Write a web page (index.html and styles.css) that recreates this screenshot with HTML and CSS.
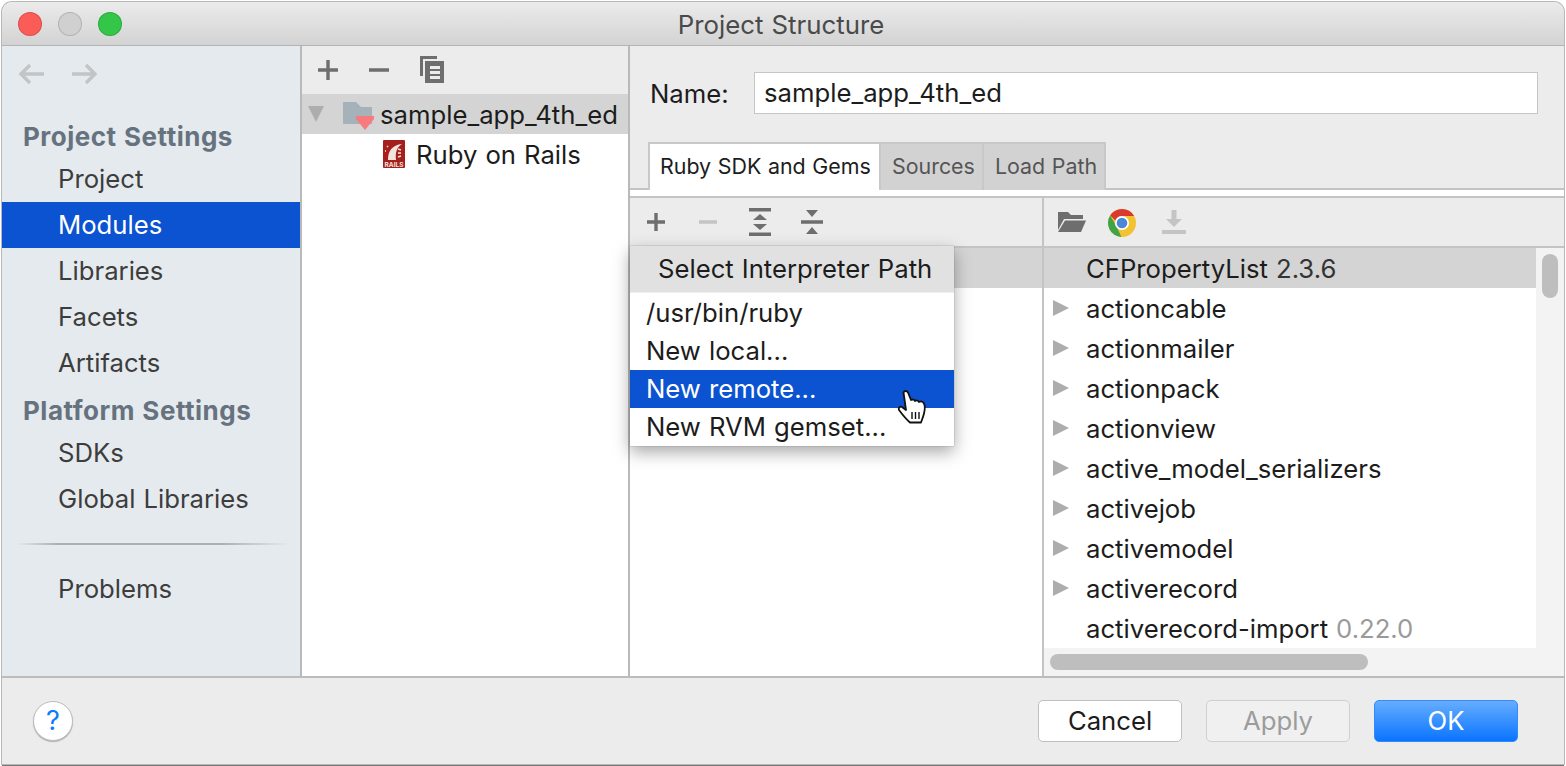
FILE: index.html
```html
<!DOCTYPE html>
<html lang="en">
<head>
    <meta charset="UTF-8">
    <title>Project Structure</title>
    <link rel="stylesheet" href="styles.css">
</head>
<body>
    <div class="window">
        <header class="titlebar">
            <div class="lights">
                <span class="light red"></span>
                <span class="light grey"></span>
                <span class="light green"></span>
            </div>
            <div class="title">Project Structure</div>
        </header>
        <div class="main">
            <aside class="sidebar">
                <div class="history">
                    <svg width="30" height="22" viewBox="0 0 30 22"><path d="M27 11H4M13 2l-9 9 9 9" fill="none" stroke="#c2c4c6" stroke-width="3.4"/></svg>
                    <svg width="30" height="22" viewBox="0 0 30 22"><path d="M2 11h23M16 2l9 9-9 9" fill="none" stroke="#c2c4c6" stroke-width="3.4"/></svg>
                </div>
                <div class="side-head first">Project Settings</div>
                <div class="side-item">Project</div>
                <div class="side-item active">Modules</div>
                <div class="side-item">Libraries</div>
                <div class="side-item">Facets</div>
                <div class="side-item">Artifacts</div>
                <div class="side-head">Platform Settings</div>
                <div class="side-item">SDKs</div>
                <div class="side-item">Global Libraries</div>
                <div class="side-sep"></div>
                <div class="side-item">Problems</div>
            </aside>
            <section class="modules">
                <div class="toolbar mod-tools">
                    <svg width="22" height="22" viewBox="0 0 22 22"><path d="M11 1v20M1 11h20" stroke="#6e6e6e" stroke-width="3.4"/></svg>
                    <svg width="22" height="22" viewBox="0 0 22 22"><path d="M1 11h20" stroke="#6e6e6e" stroke-width="3.4"/></svg>
                    <svg width="26" height="28" viewBox="0 0 26 28"><path d="M1 0h17v3H4v17H1z" fill="#6e6e6e"/><path fill-rule="evenodd" d="M6 5h19v22H6zM11 10v3h10v-3zM11 15v3h10v-3zM11 20v3h10v-3z" fill="#6e6e6e"/></svg>
                </div>
                <div class="tree-row selected">
                    <span class="tri-down"></span>
                    <svg class="folder" width="32" height="32" viewBox="0 0 32 32"><path d="M0 2h13l5 5h11v17H0z" fill="#a5b2ba"/><path d="M13 16h18v3l-9 11-9-11z" fill="#f77b7c"/></svg>
                    <span>sample_app_4th_ed</span>
                </div>
                <div class="tree-row child">
                    <svg width="22" height="28" viewBox="0 0 22 28">
                        <rect width="22" height="28" rx="1" fill="#a5201c"/>
                        <path d="M5 20C5 11 9 5 19 4c-5 3-7 8-6 16z" fill="#f3e3dc"/>
                        <path d="M15 9l3 1M15 13l3 0M15 17l3-1M4 6l1 1M2 11l1 0" stroke="#f3e3dc" stroke-width="1.5"/>
                        <text class="rails-label" x="11" y="26.500" text-anchor="middle">RAILS</text>
                    </svg>
                    <span>Ruby on Rails</span>
                </div>
            </section>
            <section class="details">
                <div class="name-row">
                    <label class="name-label">Name:</label>
                    <div class="name-input">sample_app_4th_ed</div>
                </div>
                <div class="tabs">
                    <div class="tab active">Ruby SDK and Gems</div>
                    <div class="tab">Sources</div>
                    <div class="tab">Load Path</div>
                </div>
                <div class="panes">
                    <div class="pane sdk-pane">
                        <div class="toolbar sdk-tools">
                            <svg width="20" height="20" viewBox="0 0 20 20"><path d="M10 1v18M1 10h18" stroke="#6e6e6e" stroke-width="3.4"/></svg>
                            <svg class="minus" width="20" height="20" viewBox="0 0 20 20"><path d="M1 10h18" stroke="#c4c4c4" stroke-width="3.4"/></svg>
                            <svg width="24" height="28" viewBox="0 0 24 28"><path d="M1 0h22v3.500H1zM1 24.500h22V28H1zM12 6l7 6H5zM12 22l-7-6h14z" fill="#6e6e6e"/></svg>
                            <svg class="collapse" width="24" height="28" viewBox="0 0 24 28"><path d="M1 12.300h22v3.400H1zM6 2h12l-6 7zM12 19l6 7H6z" fill="#6e6e6e"/></svg>
                        </div>
                        <div class="sdk-list">
                            <div class="gem-row selected"></div>
                        </div>
                    </div>
                    <div class="pane gems-pane">
                        <div class="toolbar gem-tools">
                            <svg width="30" height="22" viewBox="0 0 30 22"><path d="M1 1h10l3 3h12v4H7L1 19z" fill="#6e6e6e"/><path d="M8 9.500h21L24 21H1z" fill="#6e6e6e"/></svg>
                            <svg class="chrome" width="30" height="30" viewBox="0 0 30 30">
                                <circle cx="15" cy="15" r="14" fill="#f2c230"/>
                                <path d="M15 1a14 14 0 0 1 12.100 7H15a7 7 0 0 0-6.600 4.500L3.200 7.500A14 14 0 0 1 15 1z" fill="#d9392f"/>
                                <path d="M3.200 7.500l6.200 10.700 5 10.800A14 14 0 0 1 3.200 7.500z" fill="#3fa349"/>
                                <circle cx="15" cy="15" r="7" fill="#fff"/>
                                <circle cx="15" cy="15" r="5.300" fill="#4a87d6"/>
                            </svg>
                            <svg class="download" width="24" height="24" viewBox="0 0 24 24"><path d="M9.500 0h5v9H20l-8 8-8-8h5.500zM0 20h24v4H0z" fill="#c4c4c4"/></svg>
                        </div>
                        <div class="gem-body">
                            <div class="gem-list">
                                <div class="gem-row selected"><span class="gem-name">CFPropertyList <span class="ver-dark">2.3.6</span></span></div>
                                <div class="gem-row"><span class="tri-right"></span><span class="gem-name">actioncable</span></div>
                                <div class="gem-row"><span class="tri-right"></span><span class="gem-name">actionmailer</span></div>
                                <div class="gem-row"><span class="tri-right"></span><span class="gem-name">actionpack</span></div>
                                <div class="gem-row"><span class="tri-right"></span><span class="gem-name">actionview</span></div>
                                <div class="gem-row"><span class="tri-right"></span><span class="gem-name">active_model_serializers</span></div>
                                <div class="gem-row"><span class="tri-right"></span><span class="gem-name">activejob</span></div>
                                <div class="gem-row"><span class="tri-right"></span><span class="gem-name">activemodel</span></div>
                                <div class="gem-row"><span class="tri-right"></span><span class="gem-name">activerecord</span></div>
                                <div class="gem-row"><span class="gem-name">activerecord-import <span class="ver">0.22.0</span></span></div>
                            </div>
                            <div class="vscroll"><div class="vthumb"></div></div>
                        </div>
                        <div class="hscroll"><div class="hthumb"></div></div>
                    </div>
                </div>
                <div class="popup">
                    <div class="popup-head">Select Interpreter Path</div>
                    <div class="popup-item">/usr/bin/ruby</div>
                    <div class="popup-item">New local...</div>
                    <div class="popup-item active">New remote...</div>
                    <div class="popup-item">New RVM gemset...</div>
                </div>
                <svg class="cursor" width="30" height="35" viewBox="0 0 30 35">
                    <path d="M6.500 2.500c1-2 3.500-2 4.500 0L14 10c2-1 3.500-.5 4 1 1.500-1 3.500-.5 4 1 2-1 4-.5 5 1.500 1 2 1 6 0 10-1 4-2 6-3 9H13C10 30 5 24 2 20c-1-2 1-4 3-3l4 3z" fill="#fff" stroke="#111" stroke-width="1.8" stroke-linejoin="round"/>
                    <path d="M15 22v7M18.500 22v7M22 22v7" stroke="#111" stroke-width="1.4"/>
                </svg>
            </section>
        </div>
        <footer class="footer">
            <div class="help">?</div>
            <div class="buttons">
                <div class="btn">Cancel</div>
                <div class="btn disabled">Apply</div>
                <div class="btn primary">OK</div>
            </div>
        </footer>
    </div>
</body>
</html>
```

FILE: styles.css
```css
* {
    box-sizing: border-box;
}
html, body {
    height: 100%;
}
body {
    margin: 0;
    padding: 2px;
    background-color: #fff;
    font-family: Inter, "Liberation Sans", sans-serif;
    font-size: 25.7px;
    word-spacing: 0.8px;
    color: #1c1c1c;
    overflow: hidden;
}
.window {
    height: 762px;
    display: flex;
    flex-direction: column;
    background: #ececec;
    border-radius: 10px 10px 0 0;
    box-shadow: 0 0 0 1px #b8b8b8, 0 2px 0 #777;
    overflow: hidden;
}
.titlebar {
    height: 44px;
    flex: none;
    display: flex;
    align-items: center;
    position: relative;
    background: linear-gradient(#ebebeb, #d3d3d3);
    border-bottom: 1px solid #b4b4b4;
}
.lights {
    display: flex;
    gap: 16px;
    padding-left: 16px;
}
.light {
    width: 24px;
    height: 24px;
    border-radius: 50%;
    border: 1px solid rgba(0, 0, 0, 0.14);
}
.red { background: #fc5c57; }
.grey { background: #d0d0d0; }
.green { background: #33c648; }
.title {
    position: absolute;
    left: 0;
    right: 4px;
    top: 5px;
    text-align: center;
    color: #4a4a4a;
    font-size: 25.8px;
    line-height: 36px;
}
.main {
    flex: 1;
    display: flex;
    min-height: 0;
}
.sidebar {
    width: 300px;
    flex: none;
    background: #e5eaee;
    border-right: 2px solid #b9b9b9;
}
.history {
    display: flex;
    gap: 23px;
    padding: 17px 0 0 15px;
    height: 74px;
}
.side-head {
    height: 44px;
    line-height: 50px;
    padding-left: 21px;
    font-weight: 700;
    color: #66727e;
    font-size: 26px;
    letter-spacing: 0.5px;
}
.side-head.first {
    height: 36px;
    line-height: 34px;
}
.side-item {
    height: 46px;
    line-height: 46px;
    padding-left: 56px;
    color: #3d3d3d;
}
.side-item.active {
    background: #0b53d0;
    color: #fff;
}
.side-sep {
    height: 2px;
    margin: 21px 10px 21px 14px;
    background: linear-gradient(to right, #e5eaee, #adb0b2 15%, #adb0b2 75%, #e5eaee);
}
.modules {
    width: 328px;
    flex: none;
    background: #fff;
    border-right: 2px solid #b9b9b9;
    overflow: hidden;
}
.toolbar {
    display: flex;
    align-items: center;
    background: #ececec;
}
.mod-tools {
    height: 48px;
    gap: 29px;
    padding-left: 15px;
}
.tree-row {
    height: 40px;
    display: flex;
    align-items: center;
    white-space: nowrap;
}
.tree-row.selected {
    background: #d4d4d4;
}
.tri-down {
    width: 0;
    height: 0;
    margin-left: 6px;
    border-left: 8px solid transparent;
    border-right: 8px solid transparent;
    border-top: 16px solid #adadad;
}
.folder {
    margin: 4px 5px 0 19px;
}
.tree-row.child {
    padding-left: 81px;
    gap: 11px;
}
.rails-label {
    font-size: 6.5px;
    font-weight: 700;
    fill: #f3e3dc;
}
.details {
    flex: 1;
    min-width: 0;
    position: relative;
    display: flex;
    flex-direction: column;
}
.name-row {
    height: 96px;
    flex: none;
    display: flex;
    align-items: center;
    padding: 0 26px 2px 20px;
}
.name-label {
    width: 104px;
    flex: none;
}
.name-input {
    flex: 1;
    height: 42px;
    line-height: 40px;
    padding-left: 9px;
    background: #fff;
    border: 1px solid #c6c6c6;
}
.tabs {
    height: 48px;
    flex: none;
    display: flex;
    padding-left: 18px;
    font-size: 21.4px;
    word-spacing: 0.6px;
    border-bottom: 2px solid #c4c4c4;
}
.tab {
    height: 48px;
    line-height: 44px;
    padding: 0 7px 0 11px;
    background: #d2d2d2;
    color: #555;
    border: 2px solid #c8c8c8;
    border-left-width: 0;
    border-bottom: 0;
}
.tab.active {
    width: 233px;
    padding: 0 10px;
    background: #fff;
    color: #1c1c1c;
    border-left-width: 2px;
    white-space: nowrap;
}
.panes {
    flex: 1;
    min-height: 0;
    display: flex;
    margin-top: 6px;
    border-top: 2px solid #c4c4c4;
    position: relative;
}
.details::before {
    content: "";
    position: absolute;
    left: 0;
    right: 0;
    top: 144px;
    height: 6px;
    background: #fff;
}
.pane {
    min-width: 0;
    display: flex;
    flex-direction: column;
}
.sdk-pane {
    width: 414px;
    flex: none;
    border-right: 2px solid #c4c4c4;
    background: #fff;
}
.gems-pane {
    flex: 1;
}
.sdk-tools, .gem-tools {
    height: 50px;
    flex: none;
    border-bottom: 2px solid #c4c4c4;
}
.sdk-tools {
    padding-left: 16px;
    gap: 30px;
}
.minus {
    margin-left: 2px;
}
.collapse {
    margin-left: -2px;
}
.gem-tools {
    padding-left: 13px;
    gap: 20px;
}
.chrome {
    margin-top: 2px;
}
.download {
    margin-left: 5px;
}
.gem-body {
    flex: 1;
    min-height: 0;
    display: flex;
    overflow: hidden;
}
.gem-list {
    flex: 1;
    min-width: 0;
    background: #fff;
}
.gem-row {
    height: 40px;
    display: flex;
    align-items: center;
    padding-left: 42px;
    position: relative;
    white-space: nowrap;
}
.gem-row.selected {
    background: #d4d4d4;
}
.tri-right {
    position: absolute;
    left: 9px;
    top: 12px;
    width: 0;
    height: 0;
    border-top: 8px solid transparent;
    border-bottom: 8px solid transparent;
    border-left: 16px solid #adadad;
}
.ver {
    color: #9a9a9a;
}
.ver-dark {
    color: #333;
}
.vscroll {
    width: 28px;
    flex: none;
    background: #f3f3f3;
    padding: 6px 6px 0;
}
.vthumb {
    width: 16px;
    height: 44px;
    border-radius: 8px;
    background: #bebebe;
}
.hscroll {
    height: 28px;
    flex: none;
    background: #f3f3f3;
    padding: 6px 0 0 6px;
}
.hthumb {
    width: 318px;
    height: 16px;
    border-radius: 8px;
    background: #bebebe;
}
.popup {
    position: absolute;
    left: 0;
    top: 200px;
    width: 324px;
    height: 200px;
    background: #fff;
    box-shadow: 0 0 1px #777, 0 6px 16px rgba(0, 0, 0, 0.35);
}
.popup-head {
    height: 46px;
    line-height: 46px;
    margin-bottom: 2px;
    padding-left: 28px;
    background: #e1e1e1;
    box-shadow: 0 1px 0 #f0f0f0;
}
.popup-item {
    height: 38px;
    line-height: 38px;
    padding-left: 16px;
}
.popup-item.active {
    background: #0b53d0;
    color: #fff;
}
.cursor {
    position: absolute;
    left: 267px;
    top: 344px;
}
.footer {
    height: 88px;
    flex: none;
    display: flex;
    align-items: center;
    justify-content: space-between;
    padding: 0 44px 0 31px;
    background: #ececec;
    border-top: 2px solid #bcbcbc;
}
.help {
    width: 40px;
    height: 40px;
    border-radius: 50%;
    background: #fff;
    border: 1px solid #bdbdbd;
    box-shadow: 0 1px 1px rgba(0, 0, 0, 0.25);
    color: #0a7cff;
    text-align: center;
    line-height: 38px;
    font-size: 27px;
}
.buttons {
    display: flex;
    gap: 24px;
    margin-right: 2px;
}
.btn {
    width: 144px;
    height: 42px;
    line-height: 40px;
    text-align: center;
    background: #fff;
    border: 1px solid #c0c0c0;
    border-radius: 5px;
}
.btn.disabled {
    background: #f0f0f0;
    color: #9c9c9c;
    border-color: #cfcfcf;
}
.btn.primary {
    background: linear-gradient(#66adff, #0a74ff);
    border-color: #2f8bff;
    color: #fff;
}
```
